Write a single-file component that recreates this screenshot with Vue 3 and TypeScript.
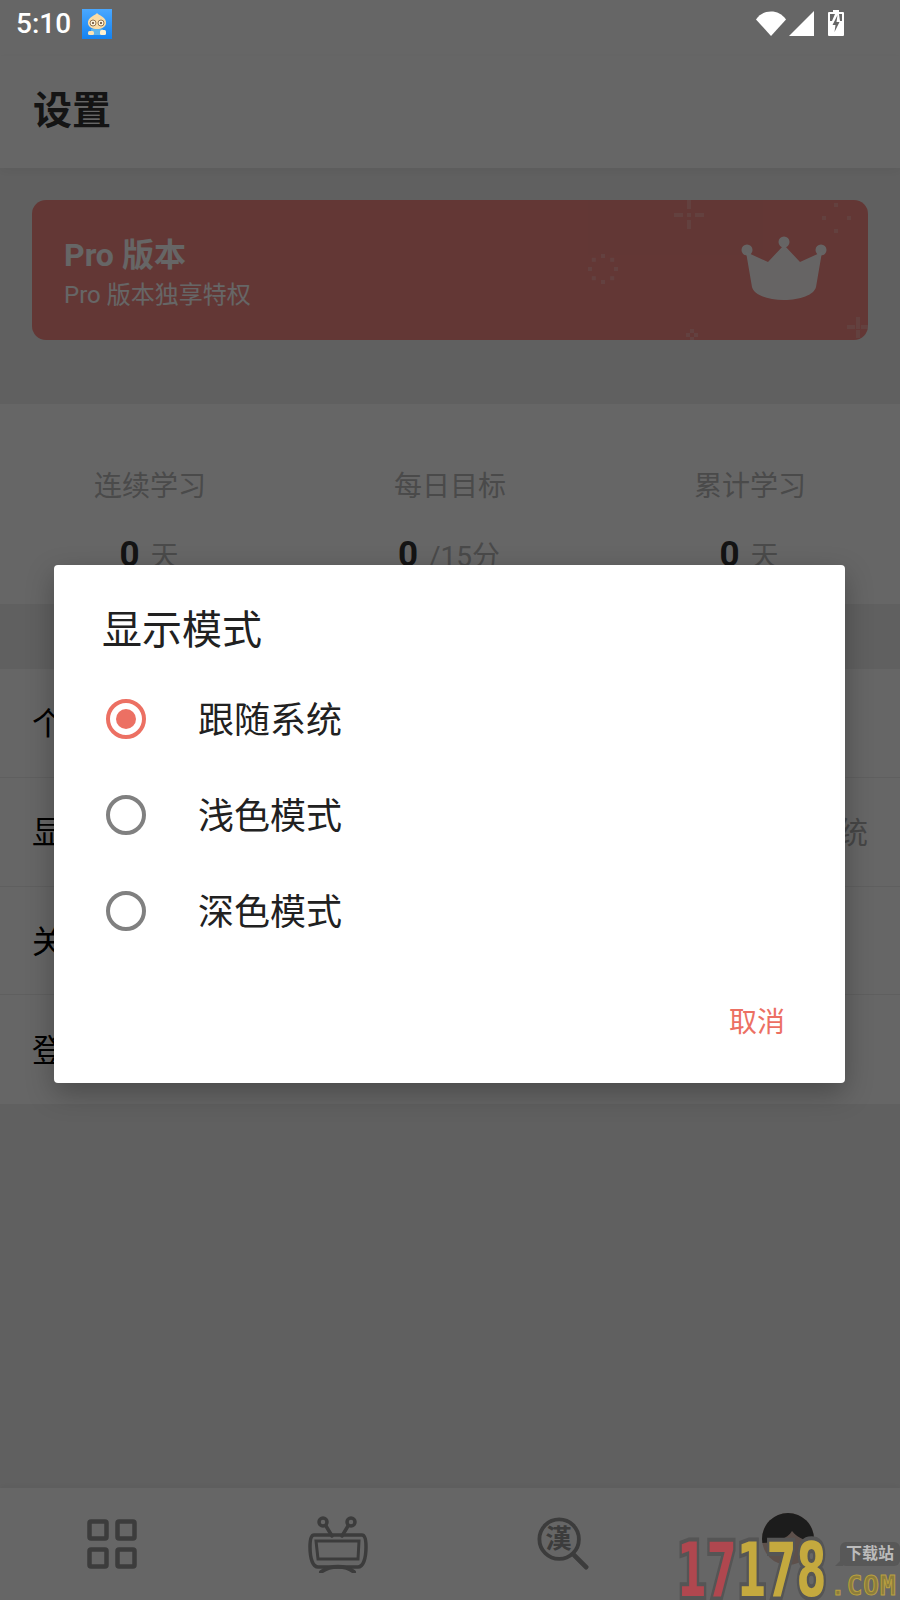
<script setup lang="ts">
import { ref } from "vue";

const stats = [
  { label: "连续学习", value: "0", unit: "天" },
  { label: "每日目标", value: "0", unit: "/15分" },
  { label: "累计学习", value: "0", unit: "天" },
];

const rows = [
  { title: "个人信息", extra: "" },
  { title: "显示模式", extra: "跟随系统" },
  { title: "关于我们", extra: "" },
  { title: "登录", extra: "" },
];

const modes = ["跟随系统", "浅色模式", "深色模式"];
const selected = ref(0);

const ringDots = [0, 45, 90, 135, 180, 225, 270, 315].map((deg) => ({
  x: 603 + 13 * Math.cos((deg * Math.PI) / 180) - 2,
  y: 269 + 13 * Math.sin((deg * Math.PI) / 180) - 2,
}));
</script>

<template>
  <div class="page">
    <header class="status-bar">
      <div class="status-left">
        <span class="clock">5:10</span>
        <svg class="app-badge" width="30" height="30" viewBox="0 0 30 30">
          <defs>
            <linearGradient id="badge" x1="0" y1="0" x2="0" y2="1">
              <stop offset="0" stop-color="#4aa8ff" />
              <stop offset="1" stop-color="#1482f0" />
            </linearGradient>
          </defs>
          <rect width="30" height="30" fill="url(#badge)" />
          <path d="M15 4c1 1.500 3 2 5 3.500 3 2 4.500 4.500 4 7-.5 3.500-4 5.500-9 5.500s-8.500-2-9-5.500c-.5-2.500 1-5 4-7C12 6 14 5.500 15 4z" fill="#fbdca6" />
          <circle cx="11" cy="14" r="3" fill="#fff3da" stroke="#7a5a3a" stroke-width=".8" />
          <circle cx="19" cy="14" r="3" fill="#fff3da" stroke="#7a5a3a" stroke-width=".8" />
          <circle cx="11" cy="14" r="1" fill="#5a3a20" />
          <circle cx="19" cy="14" r="1" fill="#5a3a20" />
          <rect x="9" y="20" width="12" height="6" fill="#5cb4ee" />
          <rect x="6" y="22" width="6" height="4" rx="1.500" fill="#fbe3b5" />
          <rect x="18" y="21" width="6" height="5" rx="1.500" fill="#fff1d0" />
        </svg>
      </div>
      <div class="status-right">
        <svg width="30" height="25" viewBox="0 0 30 25">
          <path d="M0 8.500C4 3 9 0.500 15 0.500S26 3 30 8.500L15 25z" fill="#fff" />
        </svg>
        <svg width="25" height="25" viewBox="0 0 25 25">
          <path d="M25 0v25H0z" fill="#fff" />
        </svg>
        <svg class="battery" width="16" height="26" viewBox="0 0 16 26">
          <path d="M5 0h6v2h4a1 1 0 0 1 1 1v22a1 1 0 0 1-1 1H1a1 1 0 0 1-1-1V3a1 1 0 0 1 1-1h4z" fill="#fff" />
          <path d="M2 4h5l-3 7H2zM11 4h3v7h-2z" fill="#666" />
          <path d="M9.500 5 4.500 15h3l-1 7 5-10h-3z" fill="#666" />
        </svg>
      </div>
    </header>

    <div class="app-bar">
      <h1>设置</h1>
    </div>

    <main class="content">
      <section class="banner">
        <div class="banner-title">Pro 版本</div>
        <div class="banner-sub">Pro 版本独享特权</div>
        <svg class="banner-art" width="836" height="140" viewBox="32 200 836 140">
          <g fill="#fff" opacity=".22">
            <path d="M687 200h4v9h-4zM687 220h4v9h-4zM674 213h9v4h-9zM695 213h9v4h-9zM687 213h4v4h-4z" />
            <path d="M834 203h4v4h-4zM822 216h4v4h-4zM847 216h4v4h-4zM834 229h4v4h-4z" />
            <path d="M856 317h4v8h-4zM856 330h4v8h-4zM847 325h8v4h-8zM861 325h7v4h-7zM856 325h4v4h-4z" />
            <path d="M690 329h4v4h-4zM686 333h4v4h-4zM694 333h4v4h-4zM690 337h4v3h-4z" />
            <rect v-for="(d, i) in ringDots" :key="i" :x="d.x" :y="d.y" width="4" height="4" />
          </g>
          <path
            d="M746 252 768 262 784 245 800 262 822 252 816 287C814 295 800 300 784 300S754 295 752 287Z"
            fill="#fff"
            opacity=".96"
          />
          <g fill="#fff" opacity=".96">
            <circle cx="747" cy="250" r="5.500" />
            <circle cx="784" cy="242" r="5.500" />
            <circle cx="821" cy="250" r="5.500" />
          </g>
        </svg>
      </section>

      <section class="stats">
        <div v-for="item in stats" :key="item.label" class="stat">
          <div class="stat-label">{{ item.label }}</div>
          <div class="stat-value">
            <b>{{ item.value }}</b>
            <span>{{ item.unit }}</span>
          </div>
        </div>
      </section>

      <section class="list">
        <div v-for="row in rows" :key="row.title" class="row">
          <span class="row-title">{{ row.title }}</span>
          <span v-if="row.extra" class="row-extra">{{ row.extra }}</span>
        </div>
      </section>
    </main>

    <nav class="tab-bar">
      <div class="tab">
        <svg class="tab-grid" width="50" height="50" viewBox="0 0 50 50" fill="none" stroke="#969696" stroke-width="4.500">
          <rect x="2.500" y="2.500" width="17" height="17" rx="1.500" />
          <rect x="30.500" y="2.500" width="17" height="17" rx="1.500" />
          <rect x="2.500" y="30.500" width="17" height="17" rx="1.500" />
          <rect x="30.500" y="30.500" width="17" height="17" rx="1.500" />
        </svg>
      </div>
      <div class="tab">
        <svg width="60" height="58" viewBox="0 0 60 58" fill="none" stroke="#969696" stroke-width="3.500" stroke-linecap="round">
          <circle cx="15" cy="7" r="4" />
          <circle cx="43" cy="7" r="4" />
          <path d="M18 11 24 21M40 11 34 21" />
          <path d="M6 20H54C57 20 58 24 58 32 58 44 55 52 50 52H10C5 52 2 44 2 32 2 24 3 20 6 20Z" />
          <path d="M8 26H51L50 44H10Z" stroke-width="3" />
          <path d="M13 57C22 50 38 50 46 57" stroke-width="4" />
        </svg>
      </div>
      <div class="tab">
        <span class="search-icon">
          <svg width="52" height="54" viewBox="0 0 54 56" fill="none" stroke="#969696" stroke-width="4" stroke-linecap="round">
            <circle cx="23" cy="23" r="20.500" />
            <path d="M38 39 51 52" stroke-width="5" />
          </svg>
          <span class="search-char">漢</span>
        </span>
      </div>
      <div class="tab tab-avatar">
        <svg class="avatar" width="52" height="52" viewBox="0 0 52 52">
          <defs>
            <clipPath id="avatar-clip"><circle cx="26" cy="26" r="26" /></clipPath>
          </defs>
          <g clip-path="url(#avatar-clip)">
            <rect width="52" height="52" fill="#e8c8bc" />
            <path d="M0 0H52V30C46 28 36 26 30 18 26 26 12 30 0 30Z" fill="#474747" />
          </g>
        </svg>
      </div>
    </nav>

    <div class="scrim"></div>

    <div class="dialog">
      <h2>显示模式</h2>
      <div
        v-for="(mode, i) in modes"
        :key="mode"
        class="option"
        @click="selected = i"
      >
        <span class="radio" :class="{ on: selected === i }"></span>
        <span class="option-text">{{ mode }}</span>
      </div>
      <div class="dialog-actions">
        <button type="button">取消</button>
      </div>
    </div>

    <div class="watermark">
      <div class="wm-digits">
        <span class="red">1</span><span class="red">7</span><span class="yellow">1</span><span class="yellow">7</span><span class="yellow">8</span>
      </div>
      <div class="wm-tag">下载站</div>
      <div class="wm-com">.COM</div>
    </div>
  </div>
</template>

<style>
html,
body {
  margin: 0;
  background: #606060;
}
</style>

<style scoped>
.page {
  position: relative;
  display: flex;
  flex-direction: column;
  width: 900px;
  height: 1600px;
  overflow: hidden;
  background: #f0f0f0;
  color: #000;
  font-family: Roboto, "Noto Sans CJK SC", sans-serif;
}

.status-bar {
  display: flex;
  align-items: flex-start;
  justify-content: space-between;
  height: 56px;
  padding: 9px 56px 0 16px;
  box-sizing: border-box;
  background: #fff;
}

.status-left,
.status-right {
  position: relative;
  z-index: 3;
  display: flex;
}

.status-left {
  align-items: center;
  gap: 11px;
}

.status-right {
  gap: 3px;
  padding-top: 2px;
}

.battery {
  margin-left: 11px;
  margin-top: -1px;
}

.clock {
  color: #fff;
  font-size: 28px;
  font-weight: 500;
  line-height: 30px;
}

.app-bar {
  display: flex;
  align-items: center;
  height: 112px;
  padding: 0 33px 11px;
  box-sizing: border-box;
  background: #fff;
  box-shadow: 0 3px 10px rgba(0, 0, 0, 0.05);
  position: relative;
}

h1 {
  margin: 0;
  color: #333;
  font-size: 39px;
  font-weight: 700;
}

.content {
  flex: 1;
  padding-top: 32px;
}

.banner {
  position: relative;
  box-sizing: border-box;
  height: 140px;
  margin: 0 32px;
  padding: 34px 32px 0;
  border-radius: 14px;
  overflow: hidden;
  background: #f78a85;
  color: #fff;
}

.banner-art {
  position: absolute;
  left: 0;
  top: 0;
}

.banner-title {
  font-size: 32px;
  font-weight: 700;
  line-height: 42px;
}

.banner-sub {
  margin-top: 1px;
  font-size: 24px;
  line-height: 36px;
}

.stats {
  display: flex;
  height: 200px;
  margin-top: 64px;
  padding-top: 64px;
  box-sizing: border-box;
  background: #fff;
}

.stat {
  flex: 1;
  text-align: center;
}

.stat-label {
  color: #b8b8b8;
  font-size: 28px;
  line-height: 38px;
}

.stat-value {
  margin-top: 26px;
  line-height: 46px;
  color: #b8b8b8;
  font-size: 28px;
}

.stat-value b {
  margin-right: 11px;
  margin-left: -2px;
  color: #333;
  font-size: 35px;
}

.list {
  margin-top: 65px;
  background: #fff;
}

.row {
  display: flex;
  align-items: center;
  justify-content: space-between;
  box-sizing: border-box;
  height: 108.75px;
  padding: 0 32px 3px;
  border-bottom: 1px solid #eee;
  font-size: 32px;
}

.row:last-child {
  border-bottom: 0;
}

.row-extra {
  color: #b0b0b0;
  font-size: 30px;
}

.tab-bar {
  display: grid;
  grid-template-columns: 225px 225px 225px 225px;
  height: 112px;
  background: #fff;
  box-shadow: 0 -2px 6px rgba(0, 0, 0, 0.04);
  position: relative;
}

.tab {
  display: flex;
  align-items: center;
  justify-content: center;
}

.tab-grid {
  margin-right: 2px;
}

.tab-avatar {
  padding-bottom: 10px;
}

.search-icon {
  position: relative;
  display: block;
  width: 52px;
  height: 54px;
}

.search-char {
  position: absolute;
  left: 7px;
  top: 3px;
  width: 30px;
  color: #969696;
  font-size: 26px;
  font-weight: 700;
  line-height: 38px;
  text-align: center;
}

.avatar {
  display: block;
}

.scrim {
  position: absolute;
  inset: 0;
  z-index: 1;
  background: rgba(0, 0, 0, 0.6);
}

.dialog {
  position: absolute;
  left: 54px;
  top: 565px;
  z-index: 2;
  width: 791px;
  height: 518px;
  box-sizing: border-box;
  padding-top: 40px;
  border-radius: 4px;
  background: #fff;
  box-shadow: 0 10px 28px rgba(0, 0, 0, 0.28);
  color: #212121;
}

h2 {
  margin: 0 0 14px 48px;
  font-size: 40px;
  font-weight: 400;
  line-height: 52px;
}

.option {
  display: flex;
  align-items: center;
  gap: 52px;
  height: 96px;
  padding-left: 52px;
  font-size: 36px;
}

.option-text {
  margin-top: -4px;
}

.radio {
  position: relative;
  width: 40px;
  height: 40px;
  box-sizing: border-box;
  border: 4px solid #808080;
  border-radius: 50%;
}

.radio.on {
  border-color: #ec7063;
}

.radio.on::after {
  content: "";
  position: absolute;
  inset: 6px;
  border-radius: 50%;
  background: #ec7063;
}

.dialog-actions {
  display: flex;
  justify-content: flex-end;
  padding: 44px 60px 0 0;
}

.dialog-actions button {
  padding: 0;
  border: 0;
  background: none;
  color: #ec7063;
  font: inherit;
  font-size: 28px;
  line-height: 40px;
}

.watermark {
  position: absolute;
  left: 0;
  top: 0;
  z-index: 4;
  width: 900px;
  height: 1600px;
  pointer-events: none;
}

.wm-digits {
  position: absolute;
  left: 677px;
  top: 1542px;
  display: flex;
  font-family: "DejaVu Sans", sans-serif;
  font-size: 74px;
  font-weight: 700;
  line-height: 56px;
  white-space: nowrap;
  transform: scaleX(0.58);
  transform-origin: left top;
  -webkit-text-stroke: 8px #555;
  paint-order: stroke fill;
}

.red {
  color: #b0474f;
}

.yellow {
  color: #c4a93e;
}

.wm-tag {
  position: absolute;
  left: 840px;
  top: 1542px;
  width: 60px;
  height: 24px;
  border-radius: 6px;
  background: #585858;
  color: #bbb;
  font-size: 16px;
  font-weight: 700;
  line-height: 24px;
  text-align: center;
}

.wm-tag::before {
  content: "";
  position: absolute;
  left: -5px;
  bottom: 0;
  border-width: 0 0 8px 8px;
  border-style: solid;
  border-color: transparent transparent #585858 transparent;
}

.wm-com {
  position: absolute;
  left: 830px;
  top: 1572px;
  color: #8c7d3c;
  font-family: "DejaVu Sans Mono", monospace;
  font-size: 26px;
  font-weight: 700;
  line-height: 28px;
  letter-spacing: 1px;
  -webkit-text-stroke: 1px #b9a040;
}
</style>
